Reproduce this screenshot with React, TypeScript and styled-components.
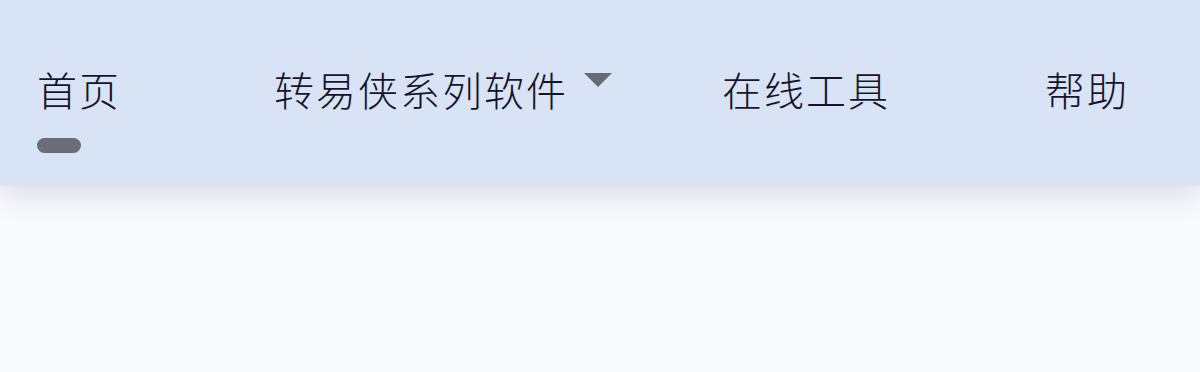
import styled, { createGlobalStyle } from 'styled-components';

const GlobalStyle = createGlobalStyle`
  html, body {
    margin: 0;
    padding: 0;
    background: #f9fafe;
  }

  body {
    font-family: 'Noto Sans CJK SC', 'Noto Sans', sans-serif;
  }
`;

type NavItemData = {
  label: string;
  active?: boolean;
  dropdown?: boolean;
};

const items: NavItemData[] = [
  { label: '首页', active: true },
  { label: '转易侠系列软件', dropdown: true },
  { label: '在线工具' },
  { label: '帮助' },
];

export default function App() {
  return (
    <>
      <GlobalStyle />
      <Page>
        <Header>
          <Nav>
            {items.map((item) => (
              <NavItem key={item.label}>
                <NavLabelRow>
                  <NavLabel>{item.label}</NavLabel>
                  {item.dropdown && <Caret />}
                </NavLabelRow>
                <ActiveBar $visible={!!item.active} />
              </NavItem>
            ))}
          </Nav>
        </Header>
        <Body />
      </Page>
    </>
  );
}

const Page = styled.div`
  width: 1200px;
  height: 372px;
  overflow: hidden;
  background: #f9fafe;
`;

const Header = styled.header`
  position: relative;
  z-index: 1;
  height: 186px;
  box-sizing: border-box;
  padding: 69px 0 0 37px;
  background: #d8e3f5;
  box-shadow: 0 10px 26px rgba(70, 78, 96, 0.16);
`;

const Nav = styled.nav`
  display: grid;
  grid-template-columns: 237px 448px 323px auto;
  align-items: start;
`;

const NavItem = styled.div`
  display: flex;
  flex-direction: column;
  align-items: flex-start;
`;

const NavLabelRow = styled.div`
  display: flex;
  align-items: center;
  gap: 16px;
`;

const NavLabel = styled.span`
  font-size: 40px;
  font-weight: 300;
  line-height: 40px;
  letter-spacing: 2px;
  color: #15142a;
`;

const Caret = styled.span`
  width: 0;
  height: 0;
  margin-top: -18px;
  border-left: 14px solid transparent;
  border-right: 14px solid transparent;
  border-top: 14px solid #676b74;
`;

const ActiveBar = styled.span<{ $visible: boolean }>`
  display: block;
  width: 44px;
  height: 15px;
  margin-top: 29px;
  border-radius: 8px;
  background: #6a6e77;
  visibility: ${(p) => (p.$visible ? 'visible' : 'hidden')};
`;

const Body = styled.main`
  height: 186px;
  background: #f9fafe;
`;
